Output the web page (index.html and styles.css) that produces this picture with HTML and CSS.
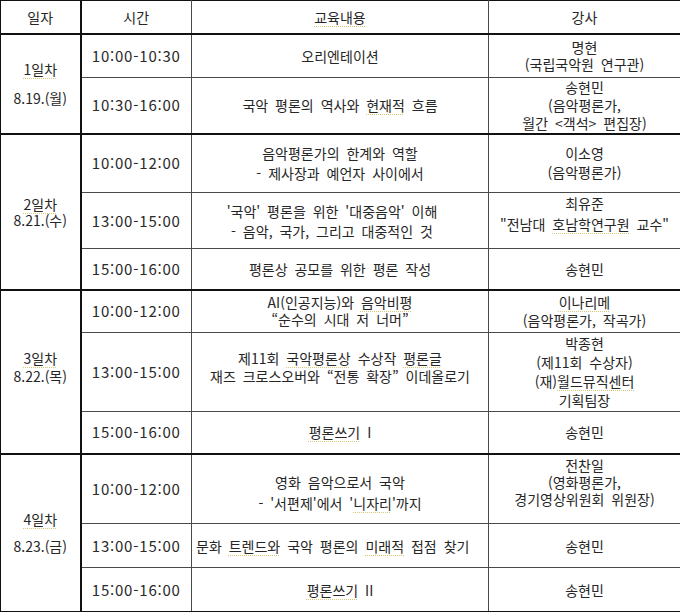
FILE: index.html
```html
<!DOCTYPE html>
<html lang="ko">
<head>
<meta charset="utf-8">
<link rel="stylesheet" href="styles.css">
</head>
<body>
<table class="sched">
  <colgroup><col class="c1"><col class="c2"><col class="c3"><col class="c4"></colgroup>
  <thead>
    <tr class="hd"><th>일자</th><th>시간</th><th><span class="sp">교육내용</span></th><th>강사</th></tr>
  </thead>
  <tbody>
    <tr class="h44 ds"><td class="day d1" rowspan="2"><span class="sp">1일차</span><br>8.19.(월)</td><td class="time">10:00-10:30</td><td>오리엔테이션</td><td class="lh17">명현<br>(국립국악원 연구관)</td></tr>
    <tr class="h56"><td class="time">10:30-16:00</td><td>국악 평론의 역사와 <span class="sp">현재적</span> 흐름</td><td class="lh18">송현민<br>(음악평론가,<br>월간 &lt;객석&gt; 편집장)</td></tr>

    <tr class="h59 ds"><td class="day d2" rowspan="3"><span class="sp">2일차</span><br>8.21.(수)</td><td class="time">10:00-12:00</td><td class="lh20">음악평론가의 한계와 역할<br>- 제사장과 예언자 사이에서</td><td class="lh19">이소영<br>(음악평론가)</td></tr>
    <tr class="h56"><td class="time">13:00-15:00</td><td class="lh20 shl">'국악' 평론을 위한 '대중음악' 이해<br>- 음악, 국가, 그리고 대중적인 것</td><td class="lh22 top">최유준<br>"전남대 <span class="sp">호남학연구원</span> 교수"</td></tr>
    <tr class="h41"><td class="time">15:00-16:00</td><td>평론상 공모를 위한 평론 작성</td><td>송현민</td></tr>

    <tr class="h43 ds"><td class="day d3" rowspan="3"><span class="sp">3일차</span><br>8.22.(목)</td><td class="time">10:00-12:00</td><td class="lh17">AI(인공지능)와 <span class="sp">음악비평</span><br>“순수의 시대 저 너머”</td><td class="lh18"><span class="sp">이나리메</span><br>(음악평론가, 작곡가)</td></tr>
    <tr class="h79"><td class="time">13:00-15:00</td><td class="lh18 up2">제11회 <span class="sp">국악평론상</span> 수상작 <span class="sp">평론글</span><br>재즈 크로스오버와 “전통 확장” 이데올로기</td><td class="lh19">박종현<br>(제11회 수상자)<br>(재)<span class="sp">월드뮤직센터</span><br>기획팀장</td></tr>
    <tr class="h42"><td class="time">15:00-16:00</td><td><span class="sp">평론쓰기</span> I</td><td>송현민</td></tr>

    <tr class="h70 ds"><td class="day d4" rowspan="3"><span class="sp">4일차</span><br>8.23.(금)</td><td class="time">10:00-12:00</td><td class="lh21 dn">영화 음악으로서 국악<br>- '서편제'에서 '<span class="sp">니자리</span>'까지</td><td class="lh17 up3">전찬일<br>(영화평론가,<br>경기영상위원회 위원장)</td></tr>
    <tr class="h44"><td class="time">13:00-15:00</td><td class="shl2">문화 <span class="sp">트렌드와</span> 국악 평론의 <span class="sp">미래적</span> 접점 찾기</td><td>송현민</td></tr>
    <tr class="h44"><td class="time">15:00-16:00</td><td><span class="sp">평론쓰기</span> II</td><td>송현민</td></tr>
  </tbody>
</table>
</body>
</html>
```

FILE: styles.css
```css
html, body {
  margin: 0;
  padding: 0;
  background: #ffffff;
}

.sched {
  width: 680px;
  border-collapse: collapse;
  table-layout: fixed;
  font-family: "Noto Sans CJK KR", "Noto Sans", sans-serif;
  font-size: 14px;
  color: #262626;
  word-spacing: 3px;
}

.c1 { width: 80px; }
.c2 { width: 111px; }
.c3 { width: 297px; }
.c4 { width: 192px; }

.sched th,
.sched td {
  border: 1px solid #4a4a4a;
  padding: 0 4px;
  text-align: center;
  vertical-align: middle;
  font-weight: normal;
  line-height: 18px;
  white-space: nowrap;
}

.sched th {
  border-top: 1px solid #111;
  border-bottom: 2px solid #111;
}

.sched th:first-child,
.sched td.day {
  border-left: 1px solid #111;
  border-right: 2px solid #111;
}

.sched th:last-child,
.sched td:last-child {
  border-right: 1px solid #222;
}

.sched tr.ds td {
  border-top: 2px solid #111;
}

.sched tbody tr:last-child td,
.sched td.d4 {
  border-bottom: 1px solid #111;
}

.hd { height: 33px; }
.h41 { height: 41px; }
.h42 { height: 42px; }
.h43 { height: 43px; }
.h44 { height: 44px; }
.h56 { height: 56px; }
.h59 { height: 59px; }
.h70 { height: 70px; }
.h79 { height: 79px; }

.sched td.time {
  font-size: 15px;
  letter-spacing: 0.8px;
  color: #2a2a2a;
}

.sched td.d1 { line-height: 29px; }
.sched td.d2 { line-height: 16px; }
.sched td.d3 { line-height: 18px; padding-bottom: 10px; }
.sched td.d4 { line-height: 27px; }

.sched td.lh17 { line-height: 17px; }
.sched td.lh18 { line-height: 18px; }
.sched td.lh19 { line-height: 19px; }
.sched td.lh20 { line-height: 20px; }
.sched td.lh21 { line-height: 21px; }
.sched td.lh22 { line-height: 21px; }

.sched td.top { vertical-align: top; padding-top: 0; }
.sched td.up2 { padding-bottom: 10px; }
.sched td.up3 { padding-bottom: 12px; }
.sched td.dn { padding-top: 8px; }
.sched td.shl { padding-right: 20px; }
.sched td.shl2 { padding-right: 30px; }

.sp {
  text-decoration: underline dotted #d8c878;
  text-decoration-thickness: 1px;
  text-underline-offset: 3px;
}
```
